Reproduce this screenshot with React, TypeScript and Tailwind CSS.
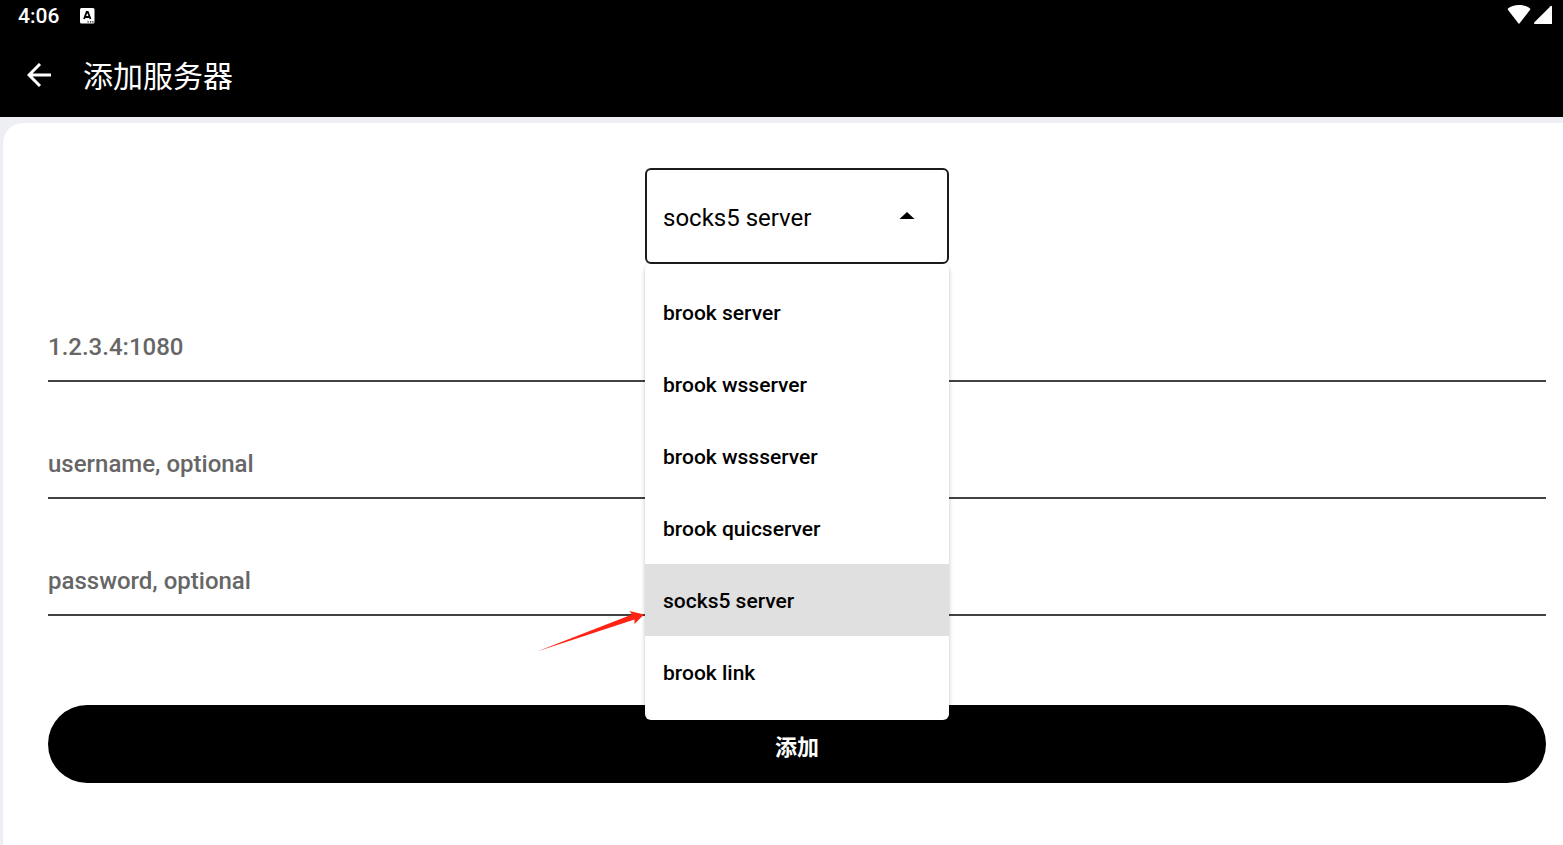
import { useState } from "react";

const SERVER_TYPES = [
    "brook server",
    "brook wsserver",
    "brook wssserver",
    "brook quicserver",
    "socks5 server",
    "brook link",
];

const FIELDS = [
    { id: "address", type: "text", placeholder: "1.2.3.4:1080" },
    { id: "username", type: "text", placeholder: "username, optional" },
    { id: "password", type: "password", placeholder: "password, optional" },
];

function StatusBar() {
    return (
        <div className="flex h-8 items-center pl-[18px] pr-[10px]">
            <span className="text-[21px] leading-8 font-medium">4:06</span>
            <svg className="ml-5 h-4 w-4" viewBox="0 0 16 16" aria-hidden="true">
                <rect x="1" y="0" width="14.5" height="15.5" rx="1.5" fill="#fff" />
                <path
                    d="M5 11 7.700 4h1.100l2.700 7M6 9H10.500"
                    fill="none"
                    stroke="#000"
                    strokeWidth="1.8"
                />
                <path d="M8.500 13.300h1.200v1.200H8.500zM11 13.300h1.200v1.200H11zM13.300 13.300h1.200v1.200h-1.200z" fill="#000" />
            </svg>
            <div className="ml-auto flex items-center gap-[3px] pb-1">
                <svg className="h-5 w-6" viewBox="0 0 24 20" aria-hidden="true">
                    <path
                        d="M12 1C7.500 1 3.600 2.300 1 4.400Q0.400 5 0.900 5.800L11.300 19.300Q12 20 12.700 19.300L23.100 5.800Q23.600 5 23 4.400C20.400 2.300 16.500 1 12 1Z"
                        fill="#fff"
                    />
                </svg>
                <svg className="h-5 w-[19px]" viewBox="0 0 19 20" aria-hidden="true">
                    <path
                        d="M16.500 2.300Q18 1.200 18 2.800V20H1Q-0.500 20 0.200 18.600Z"
                        fill="#fff"
                    />
                </svg>
            </div>
        </div>
    );
}

function Header() {
    return (
        <header className="bg-black text-white">
            <StatusBar />
            <div className="flex h-[85px] items-center gap-8 pl-[27px]">
                <button type="button" aria-label="返回">
                    <svg className="h-6 w-6" viewBox="0 0 24 24" aria-hidden="true">
                        <path
                            d="M24 12H2M13 1 2 12l11 11"
                            fill="none"
                            stroke="currentColor"
                            strokeWidth="3"
                        />
                    </svg>
                </button>
                <h1 className="pt-1 text-[30px] leading-10">添加服务器</h1>
            </div>
        </header>
    );
}

function ServerTypeSelect() {
    const [selected, setSelected] = useState("socks5 server");

    return (
        <div className="relative mx-auto w-[304px]">
            <select
                aria-label="server type"
                value={selected}
                onChange={(e) => setSelected(e.target.value)}
                className="block h-24 w-full appearance-none rounded-md border-2 border-[#1c1c1c] bg-white pt-1 pr-12 pl-4 text-2xl text-black outline-none"
            >
                {SERVER_TYPES.map((type) => (
                    <option key={type}>{type}</option>
                ))}
            </select>
            <svg
                className="pointer-events-none absolute top-11 right-[34px] h-[7px] w-4"
                viewBox="0 0 16 7"
                aria-hidden="true"
            >
                <path d="M8 0 15.500 7H0.500Z" fill="#000" />
            </svg>

            <ul
                role="listbox"
                aria-label="server types"
                className="absolute top-full left-0 z-10 w-full rounded-md bg-white py-3 shadow-[0_2px_4px_rgba(0,0,0,0.25)]"
            >
                {SERVER_TYPES.map((type) => (
                    <li key={type}>
                        <button
                            type="button"
                            role="option"
                            aria-selected={type === selected}
                            onClick={() => setSelected(type)}
                            className={`flex h-[72px] w-full items-center px-[18px] pt-1 text-[21px] font-medium text-black ${
                                type === selected ? "bg-[#e0e0e0]" : ""
                            }`}
                        >
                            {type}
                        </button>
                    </li>
                ))}
            </ul>

            {/* Red pointer at the chosen row */}
            <svg
                className="absolute top-[442px] right-full z-20 h-[42px] w-[108px]"
                viewBox="0 0 108 42"
                aria-hidden="true"
            >
                <path d="M0 41.500 95 4.500 92.500 1 107 4.500 97.500 14 97.500 9.500Z" fill="#ff2314" />
            </svg>
        </div>
    );
}

export default function App() {
    return (
        <div className="flex min-h-screen flex-col bg-[#eeeff5] font-[Roboto,'Noto_Sans_CJK_SC',sans-serif]">
            <Header />
            <main className="mt-1.5 ml-[3px] flex-1 rounded-tl-[20px] bg-white pt-[45px] pr-[17px] pb-[62px] pl-[45px] shadow-[0_1px_1px_rgba(0,0,0,0.12)]">
                <form onSubmit={(e) => e.preventDefault()}>
                    <ServerTypeSelect />
                    <div className="mt-12 flex flex-col gap-[47px]">
                        {FIELDS.map((field) => (
                            <input
                                key={field.id}
                                id={field.id}
                                type={field.type}
                                placeholder={field.placeholder}
                                aria-label={field.placeholder}
                                className="h-[70px] w-full border-b-2 border-[#424242] pt-0.5 text-2xl font-medium placeholder:text-[#666666] focus:outline-none"
                            />
                        ))}
                    </div>
                    <button
                        type="submit"
                        className="mt-[89px] h-[78px] w-full rounded-full bg-black pt-1.5 text-[22px] font-bold text-white"
                    >
                        添加
                    </button>
                </form>
            </main>
        </div>
    );
}
